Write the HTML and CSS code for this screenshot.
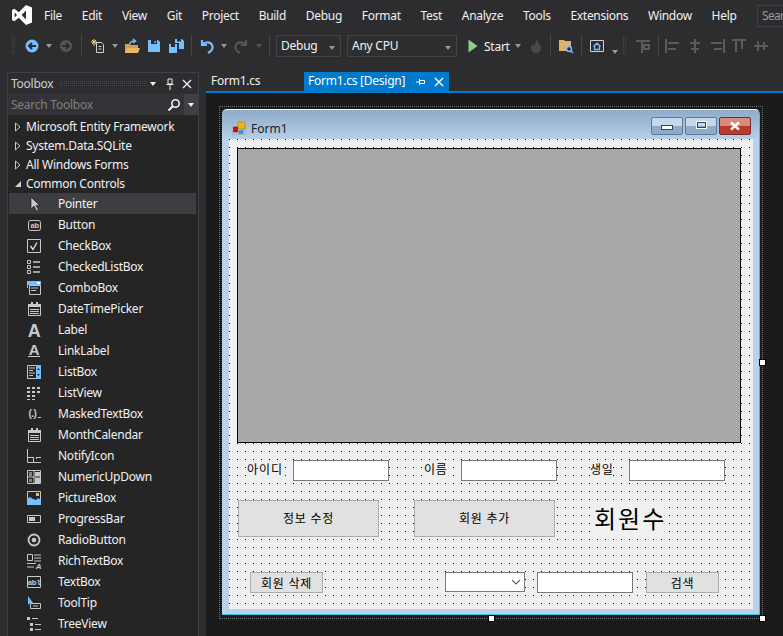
FILE: index.html
```html
<!DOCTYPE html>
<html lang="en">
<head>
<meta charset="utf-8">
<title>Form1.cs [Design]</title>
<link rel="stylesheet" href="styles.css">
</head>
<body>

<!-- menu -->
<div class="menubar">
  <svg class="logo" width="20" height="20" viewBox="0 0 20 20"><path fill="#fff" fill-rule="evenodd" d="M14 0L20 2.5V17.5L14 20L6.8 12.8L2.3 16.3L0 15V5L2.3 3.7L6.8 7.2ZM14 5.5L9.6 10L14 14.5ZM2.6 7.6V12.4L5 10Z"/></svg>
  <span class="menu m-file">File</span>
  <span class="menu">Edit</span>
  <span class="menu">View</span>
  <span class="menu">Git</span>
  <span class="menu">Project</span>
  <span class="menu">Build</span>
  <span class="menu">Debug</span>
  <span class="menu">Format</span>
  <span class="menu">Test</span>
  <span class="menu">Analyze</span>
  <span class="menu">Tools</span>
  <span class="menu">Extensions</span>
  <span class="menu">Window</span>
  <span class="menu">Help</span>
  <div class="searchbox">Sear</div>
</div>

<!-- toolbar -->
<div class="toolbar">
  <i class="grip"></i>
  <svg class="tb ml8" viewBox="0 0 16 16"><circle cx="8" cy="8" r="6.5" fill="#75beff"/><path d="M12 8H5M8 5L5 8l3 3" fill="none" stroke="#2d2d30" stroke-width="2"/></svg>
  <i class="arr"></i>
  <svg class="tb ml6" viewBox="0 0 16 16"><circle cx="8" cy="8" r="6" fill="#555"/><path d="M4 8h7M8 5l3 3-3 3" fill="none" stroke="#2d2d30" stroke-width="2"/></svg>
  <i class="sep"></i>
  <svg class="tb ml8" viewBox="0 0 16 16"><path d="M6.500 4.500h5l2 2v8h-7z" fill="none" stroke="#d0d0d0"/><path d="M8.500 8.500h3M8.500 11h3" stroke="#d0d0d0"/><path d="M4 1v7M1 4h6M2 2l4 4M6 2L2 6" stroke="#f0d080"/></svg>
  <i class="arr"></i>
  <svg class="tb ml6" viewBox="0 0 16 16"><path d="M1 6h5l1 1h7v8H1z" fill="#c9a15a"/><path d="M1 15l2-5h13l-2 5z" fill="#e8b95e"/><path d="M6 6c0-2 2-3 5-3M9 1l2.500 2L9 5" fill="none" stroke="#75beff" stroke-width="1.500"/></svg>
  <svg class="tb ml6" viewBox="0 0 16 16"><path d="M2 2h10l2 2v10H2z" fill="#75beff"/><path d="M5 2h6v4H5z" fill="#2d2d30"/><path d="M8.500 3H10v2H8.500z" fill="#75beff"/></svg>
  <svg class="tb ml6" viewBox="0 0 16 16"><path d="M1 6h8v9H1z" fill="#75beff"/><path d="M3 6h4v3H3z" fill="#2d2d30"/><path d="M7 1h7l2 2v8h-5V5H7z" fill="#75beff"/><path d="M9 1h4v2.500H9z" fill="#2d2d30"/></svg>
  <i class="sep"></i>
  <svg class="tb ml7" viewBox="0 0 16 16"><path d="M3 2v5h5M3 7c2-3 8-4 10 0s-2 7-4 8" fill="none" stroke="#75beff" stroke-width="2.200"/></svg>
  <i class="arr"></i>
  <svg class="tb ml6" viewBox="0 0 16 16"><path d="M13 2v5H8M13 7c-2-3-8-4-10 0s2 7 4 8" fill="none" stroke="#555" stroke-width="2.200"/></svg>
  <i class="arr dim"></i>
  <i class="sep"></i>
  <div class="combo c-debug">Debug<i class="arr in"></i></div>
  <div class="combo c-cpu">Any CPU<i class="arr in"></i></div>
  <svg class="tb ml8" viewBox="0 0 16 16"><path d="M3.500 1.500L12.500 8 3.500 14.500z" fill="#89d185"/></svg>
  <span class="start">Start</span>
  <i class="arr a-start"></i>
  <svg class="tb ml7" viewBox="0 0 16 16"><path d="M8 1c1 3 5 5 5 9 0 3-2 5-5 5s-5-2-5-5c0-2 1-3 2-4 0 1 .5 2 1 2 1-2 2-4 2-7z" fill="#48484a"/></svg>
  <i class="sep s6"></i>
  <svg class="tb ml7" viewBox="0 0 16 16"><path d="M1 2h5l1 1h6v10H1z" fill="#d9b36c"/><circle cx="11" cy="11" r="2.500" fill="#2d2d30" stroke="#75beff" stroke-width="1.500"/><path d="M13 13l2 2" stroke="#75beff" stroke-width="1.500"/></svg>
  <i class="sep"></i>
  <svg class="tb ml7" viewBox="0 0 16 16"><path d="M1.500 2.500h13v11h-13z" fill="none" stroke="#d0d0d0"/><path d="M4.500 8.500L8 5.200l3.500 3.300M5.500 8v3.500h5V8" fill="none" stroke="#75beff" stroke-width="1.300"/></svg>
  <i class="arr a-low"></i>
  <i class="grip g2"></i>
  <svg class="tb ml8 off" viewBox="0 0 16 16"><path d="M1 3h14M7 3v12M9 7h5v4H9z" fill="none" stroke="#5a5a5c" stroke-width="2"/></svg>
  <i class="sep"></i>
  <svg class="tb ml6 off" viewBox="0 0 16 16"><path d="M1 1v14M3 5h11M3 11h8" stroke="#5a5a5c" stroke-width="2"/></svg>
  <svg class="tb ml6 off" viewBox="0 0 16 16"><path d="M8 1v14M3 5h10M4 11h8" stroke="#5a5a5c" stroke-width="2"/></svg>
  <svg class="tb ml6 off" viewBox="0 0 16 16"><path d="M15 1v14M2 5h11M5 11h8" stroke="#5a5a5c" stroke-width="2"/></svg>
  <svg class="tb ml6 off" viewBox="0 0 16 16"><path d="M1 2h14M5 3v11M11 3v8" stroke="#5a5a5c" stroke-width="2"/></svg>
  <svg class="tb ml6 off" viewBox="0 0 16 16"><path d="M1 8h14M5 3v10M11 4v8" stroke="#5a5a5c" stroke-width="2"/></svg>
</div>

<div class="dock">

  <!-- toolbox -->
  <div class="toolbox">
    <div class="tool-head">
      <span>Toolbox</span>
      <i class="head-grip"></i>
      <i class="arr white"></i>
      <svg class="head-ico pin-ico" viewBox="0 0 12 12"><path d="M4 1h4v5H4zM2.500 6.500h7M6 7v5" fill="none" stroke="#f1f1f1"/></svg>
      <svg class="head-ico" viewBox="0 0 12 12"><path d="M2 2l8 8M10 2l-8 8" stroke="#f1f1f1" stroke-width="1.400"/></svg>
    </div>
    <div class="tool-search">
      <span class="ph">Search Toolbox</span>
      <svg class="glass" viewBox="0 0 14 14"><circle cx="8.500" cy="5.500" r="3.700" fill="none" stroke="#f1f1f1" stroke-width="1.600"/><path d="M6 8l-4.500 4.500" stroke="#f1f1f1" stroke-width="2"/></svg>
      <div class="search-drop"><i class="arr white"></i></div>
    </div>
    <div class="tree">
      <div class="group"><svg class="tri" viewBox="0 0 6 10"><path d="M.5 1v8L5 5z" fill="none" stroke="#c8c8c8"/></svg>Microsoft Entity Framework</div>
      <div class="group"><svg class="tri" viewBox="0 0 6 10"><path d="M.5 1v8L5 5z" fill="none" stroke="#c8c8c8"/></svg>System.Data.SQLite</div>
      <div class="group"><svg class="tri" viewBox="0 0 6 10"><path d="M.5 1v8L5 5z" fill="none" stroke="#c8c8c8"/></svg>All Windows Forms</div>
      <div class="group"><svg class="tri" viewBox="0 0 6 10"><path d="M0 8h6V2z" fill="#d0d0d0"/></svg>Common Controls</div>
    </div>
    <div class="items">
      <div class="item sel-row"><svg viewBox="0 0 16 16"><path d="M5 1v12l3-3 2.500 5 2-1-2.500-4.500h3.500z" fill="#c8c8c8" stroke="#111" stroke-width=".6"/></svg>Pointer</div>
      <div class="item"><svg viewBox="0 0 16 16"><rect x="2.500" y="3.500" width="12" height="10" rx="2" fill="none" stroke="#c8c8c8"/><text x="8.500" y="11" class="glyph">ab</text></svg>Button</div>
      <div class="item"><svg viewBox="0 0 16 16"><path d="M1.500 1.500h13v13h-13z" fill="none" stroke="#c8c8c8"/><path d="M4.500 8l2.500 3.500 4-7" fill="none" stroke="#e0e0e0" stroke-width="1.300"/></svg>CheckBox</div>
      <div class="item"><svg viewBox="0 0 16 16"><path d="M1.500 1.500h3v3h-3zM1.500 6.500h3v3h-3zM1.500 11.500h3v3h-3z" fill="none" stroke="#c8c8c8"/><path d="M7 3h7M7 8h7M7 13h7" stroke="#c8c8c8" stroke-width="1.500"/></svg>CheckedListBox</div>
      <div class="item"><svg viewBox="0 0 16 16"><path d="M1 1h14v4H1z" fill="#75beff"/><path d="M11 2h3v2h-3z" fill="#fff"/><path d="M3.500 5.500h11v9h-11z" fill="none" stroke="#c8c8c8"/><path d="M5 8h7M5 10.500h5" stroke="#c8c8c8"/><path d="M1.500 5v3" stroke="#75beff"/></svg>ComboBox</div>
      <div class="item"><svg viewBox="0 0 16 16"><path d="M2.500 3.500h12v11h-12z" fill="none" stroke="#c8c8c8"/><path d="M2 3h13v3H2zM5 1h2v3H5zM10 1h2v3h-2z" fill="#c8c8c8"/><path d="M4 8h9v1H4zM4 10h9v1H4zM4 12h9v1H4z" fill="#c8c8c8"/></svg>DateTimePicker</div>
      <div class="item"><svg viewBox="0 0 16 16"><text x="8" y="15" class="glyph big">A</text></svg>Label</div>
      <div class="item"><svg viewBox="0 0 16 16"><text x="8" y="11.500" class="glyph big2">A</text><path d="M2 13.500h12" stroke="#c8c8c8"/></svg>LinkLabel</div>
      <div class="item"><svg viewBox="0 0 16 16"><path d="M1.500 1.500h13v13h-13z" fill="none" stroke="#c8c8c8"/><path d="M3 4h6M3 6.500h4M3 9h6M3 11.500h4" stroke="#c8c8c8"/><path d="M10 1h5v14h-5z" fill="#75beff"/><path d="M11 6l1.500-2L14 6zM11 10l1.500 2L14 10z" fill="#2d2d30"/></svg>ListBox</div>
      <div class="item"><svg viewBox="0 0 16 16"><path d="M1 2h3v2H1zM6 2h3v2H6zM11 2h3v2h-3zM1 6h3v2H1zM6 6h3v2H6zM11 6h3v2h-3zM1 10h3v2H1zM6 10h3v2H6zM1 14h3v1H1zM6 14h3v1H6z" fill="#c8c8c8"/></svg>ListView</div>
      <div class="item"><svg viewBox="0 0 16 16"><text x="6.500" y="11" class="glyph mask">(.)</text><path d="M12 11h3v1h-3z" fill="#c8c8c8"/></svg>MaskedTextBox</div>
      <div class="item"><svg viewBox="0 0 16 16"><path d="M2.500 3.500h12v11h-12z" fill="none" stroke="#c8c8c8"/><path d="M2 3h13v3H2zM5 1h2v3H5zM10 1h2v3h-2z" fill="#c8c8c8"/><path d="M4 8h9v1H4zM4 10h9v1H4zM4 12h9v1H4z" fill="#c8c8c8"/></svg>MonthCalendar</div>
      <div class="item"><svg viewBox="0 0 16 16"><path d="M1.500 1v13.500H15" fill="none" stroke="#c8c8c8"/><path d="M1 9h6v1H1zM10 9h5v1h-5zM7 9h1v5H7zM10 9h1v2h-1z" fill="#c8c8c8"/></svg>NotifyIcon</div>
      <div class="item"><svg viewBox="0 0 16 16"><path d="M1.500 1.500h13v13h-13zM1.500 8h13M8 1.500v13" fill="none" stroke="#c8c8c8"/><path d="M9 3h5v4H9zM9 9h5v5H9z" fill="#c8c8c8"/><path d="M3 3h3v4H3zM3 10h3v3H3z" fill="#c8c8c8" fill-opacity=".6"/></svg>NumericUpDown</div>
      <div class="item"><svg viewBox="0 0 16 16"><path d="M1.500 1.500h13v13h-13z" fill="#252526" stroke="#c8c8c8"/><path d="M1 15v-6l3-2 3 2 3 1 2-2 3 2v5z" fill="#75beff"/><path d="M10 3h3v3h-3z" fill="#e8b95e"/></svg>PictureBox</div>
      <div class="item"><svg viewBox="0 0 16 16"><path d="M1.500 4.500h13v7h-13z" fill="none" stroke="#c8c8c8"/><path d="M3 6h6v4H3z" fill="#c8c8c8"/></svg>ProgressBar</div>
      <div class="item"><svg viewBox="0 0 16 16"><circle cx="8" cy="8" r="5.500" fill="none" stroke="#c8c8c8" stroke-width="1.800"/><circle cx="8" cy="8" r="2.300" fill="#c8c8c8"/></svg>RadioButton</div>
      <div class="item"><svg viewBox="0 0 16 16"><path d="M1.500 1.500h5v6h-5z" fill="none" stroke="#c8c8c8"/><path d="M8 2h7M8 5h7M8 8h7M1 10.500h9M1 14h7" stroke="#c8c8c8"/><text x="12.500" y="15.500" class="glyph ital">A</text></svg>RichTextBox</div>
      <div class="item"><svg viewBox="0 0 16 16"><path d="M1.500 2.500h13v11h-13z" fill="none" stroke="#c8c8c8"/><text x="8" y="10.500" class="glyph">abl</text></svg>TextBox</div>
      <div class="item"><svg viewBox="0 0 16 16"><path d="M4.500 8.500h10v5h-10z" fill="none" stroke="#c8c8c8"/><path d="M7 11h5" stroke="#c8c8c8"/><path d="M2 1v9l2-2 3 0z" fill="#75beff"/></svg>ToolTip</div>
      <div class="item"><svg viewBox="0 0 16 16"><path d="M1 1h3v3H1zM4 7h3v3H4zM4 12h3v3H4z" fill="#c8c8c8"/><path d="M6 2.500h6M9 8.500h6M9 13.500h6" stroke="#c8c8c8"/></svg>TreeView</div>
    </div>
  </div>

  <!-- document -->
  <div class="doc">
    <div class="tabs">
      <div class="tab">Form1.cs</div>
      <div class="tab active">Form1.cs [Design]
        <svg class="pin" viewBox="0 0 10 10"><path d="M0 5h3M3.500 2v6M3.500 3.500h5v3h-5" fill="none" stroke="#fff"/></svg>
        <svg class="tabx" viewBox="0 0 10 10"><path d="M1 1l8 8M9 1L1 9" stroke="#fff" stroke-width="1.400"/></svg>
      </div>
    </div>
    <div class="design">
      <div class="selection">
        <div class="form-win">
          <div class="titlebar">
            <svg class="form-ico" viewBox="0 0 14 14"><path d="M.5.500h13v13H.5z" fill="none" stroke="#a8b4c2"/><path d="M6 1h7v7H6z" fill="#e8b820" stroke="#a87a10" stroke-width=".6"/><path d="M1.500 6h4v5h-4z" fill="#c01818" stroke="#701010" stroke-width=".6"/><path d="M6.500 9h5v4h-5z" fill="#4a90e0"/></svg>
            <span class="form-title">Form1</span>
            <div class="capbtn"><i class="cap-min"></i></div>
            <div class="capbtn"><i class="cap-max"></i></div>
            <div class="capbtn close"><svg viewBox="0 0 12 10" width="12" height="10"><path d="M2 1.500l8 7M10 1.500l-8 7" stroke="#fff" stroke-width="2.400"/></svg></div>
          </div>
          <div class="client">
            <div class="picture"></div>

            <span class="label l-id">아이디</span>
            <div class="textbox t-id"></div>
            <span class="label l-name">이름</span>
            <div class="textbox t-name"></div>
            <span class="label l-birth">생일</span>
            <div class="textbox t-birth"></div>

            <div class="btn b-edit">정보 수정</div>
            <div class="btn b-add">회원 추가</div>
            <span class="label l-count">회원수</span>

            <div class="btn b-del">회원 삭제</div>
            <div class="dropdown"><svg viewBox="0 0 10 6" width="10" height="6"><path d="M1 1l4 4 4-4" fill="none" stroke="#606060" stroke-width="1.200"/></svg></div>
            <div class="textbox t-search"></div>
            <div class="btn b-search">검색</div>
          </div>
        </div>
        <i class="handle h-right"></i>
        <i class="handle h-bottom"></i>
        <i class="handle h-corner"></i>
      </div>
    </div>
  </div>

</div>
</body>
</html>
```

FILE: styles.css
```css
html,body{margin:0;padding:0;}
body{position:relative;width:783px;height:636px;overflow:hidden;background:#2d2d30;color:#f1f1f1;font:12px "Noto Sans","Noto Sans CJK KR",sans-serif;letter-spacing:-.25px;}
i{display:block;flex:none;}

/* menu */
.menubar{display:flex;align-items:center;height:30px;white-space:nowrap;overflow:hidden;}
.logo{flex:none;margin-left:12px;margin-right:12px;}
.menu{flex:none;margin-right:19.8px;letter-spacing:-.3px;}
.searchbox{position:absolute;left:757px;top:5px;box-sizing:border-box;width:26px;height:22px;line-height:20px;padding-left:4px;background:#2d2d30;border:1px solid #3f3f46;border-right:0;color:#999;letter-spacing:-.7px;overflow:hidden;}

/* toolbar */
.toolbar{display:flex;align-items:center;height:32px;padding-left:12px;white-space:nowrap;overflow:hidden;}
.tb{flex:none;width:16px;height:16px;}
.ml6{margin-left:6px;}
.ml7{margin-left:7px;}
.ml8{margin-left:8px;}
.grip{width:4px;height:18px;background:conic-gradient(from 0deg at 1px 1px,transparent 75%,#4a4a4e 0) 0 0/2px 2px;}
.g2{margin-left:5px;}
.arr{width:0;height:0;margin-left:6px;border-left:3.5px solid transparent;border-right:3.500px solid transparent;border-top:4px solid #999;}
.arr.dim{border-top-color:#555;margin-left:7px;}
.arr.white{border-top-color:#f1f1f1;margin-left:0;}
.arr.in{position:absolute;right:5px;top:10px;margin:0;}
.a-start{margin-left:6px;}
.a-low{margin-left:7px;margin-top:12px;}
.sep{width:1px;height:22px;margin-left:7px;background:#46464a;}
.s6{margin-left:6px;}
.combo{flex:none;position:relative;box-sizing:border-box;height:22px;line-height:20px;padding-left:4px;border:1px solid #434346;background:#2e2e31;margin-left:6px;}
.c-debug{width:65px;}
.c-cpu{width:110px;}
.start{flex:none;margin-left:3px;width:25px;}

/* dock */
.dock{display:flex;height:564px;padding-top:10px;}

/* toolbox */
.toolbox{flex:none;box-sizing:border-box;width:192px;margin-left:7px;height:564px;background:#252526;border:1px solid #3f3f46;border-bottom:0;overflow:hidden;}
.tool-head{display:flex;align-items:center;height:21px;padding-left:3px;padding-right:5px;background:#2d2d30;color:#d0d0d0;}
.head-grip{flex:1;height:5px;margin:0 3px 0 7px;background:conic-gradient(from 0deg at 1px 1px,transparent 75%,#46464a 0) 0 0/2px 2px;}
.head-ico{flex:none;width:12px;height:12px;margin-left:5px;}
.pin-ico{margin-left:8px;}
.tool-search{display:flex;align-items:center;height:21px;background:#333337;color:#808080;}
.ph{flex:1;padding-left:3px;}
.glass{flex:none;width:14px;height:14px;margin-right:3px;}
.search-drop{display:flex;align-items:center;justify-content:center;flex:none;width:14px;height:21px;background:#3f3f46;}
.tree{padding-top:2px;}
.group{display:flex;align-items:center;height:19px;padding-left:7px;}
.tri{flex:none;width:6px;height:10px;margin-right:5px;}
.item{display:flex;align-items:center;height:21px;padding-left:17px;margin-right:2px;margin-left:1px;}
.item svg{flex:none;width:16px;height:16px;margin-right:16px;overflow:visible;}
.sel-row{background:#3e3e42;}
.glyph{font:bold 8px "Liberation Mono",monospace;fill:#c8c8c8;text-anchor:middle;letter-spacing:-.5px;}
.big{font:bold 18px "Liberation Sans",sans-serif;}
.big2{font:bold 15px "Liberation Sans",sans-serif;}
.mask{font:bold 10px "Liberation Sans",sans-serif;}
.ital{font:italic bold 8px "Liberation Sans",sans-serif;}

/* document */
.doc{flex:1;margin-left:7px;min-width:0;}
.tabs{display:flex;height:19px;border-bottom:2px solid #007acc;}
.tab{box-sizing:border-box;width:98px;height:19px;line-height:18px;padding-left:5px;}
.tab.active{position:relative;width:145px;padding-left:4px;background:#007acc;color:#fff;}
.pin{position:absolute;left:112px;top:5px;width:10px;height:10px;}
.tabx{position:absolute;left:130px;top:5px;width:10px;height:10px;}
.design{height:543px;background:#1b1b1b;padding:13px 0 0 13px;overflow:hidden;}

/* form on the design surface */
.selection{position:relative;box-sizing:border-box;width:544px;height:513px;padding:2px;border:1px dotted #707070;}
.form-win{box-sizing:border-box;width:538px;height:506px;padding:0 7px 6px;border-top:1px solid #fff;border-bottom:1px solid #3cc0e0;border-right:1px solid #3cc0e0;border-radius:5px 5px 0 0;background:linear-gradient(#8eabc9,#b9d1ea 30px);letter-spacing:0;}
.titlebar{display:flex;align-items:center;box-sizing:border-box;height:29px;padding:7px 1px 0 0;color:#222;}
.form-ico{flex:none;width:14px;height:14px;margin-left:3px;}
.form-title{flex:1;margin-left:5px;}
.capbtn{display:flex;align-items:center;justify-content:center;box-sizing:border-box;width:32px;height:18px;margin:-5px 0 0 2px;border:1px solid #5f7a98;border-radius:2px;background:linear-gradient(#c5d8ec 50%,#8eabc9 50%);}
.capbtn.close{border-color:#7a2a2a;background:linear-gradient(#d88a7c 50%,#b73a2a 50%);}
.cap-min{width:10px;height:3px;margin-top:4px;background:#fff;border:1px solid #444;}
.cap-max{width:7px;height:4px;margin-bottom:2px;background:transparent;border:1px solid #444;outline:1px solid #fff;}

.client{position:relative;width:524px;height:470px;font-size:12px;color:#000;background:#f0f0f0 conic-gradient(from 0deg at 1px 1px,transparent 75%,#000 0) 0 0/8px 8px;letter-spacing:.7px;}
.picture{position:absolute;left:8px;top:9px;box-sizing:border-box;width:504px;height:295px;background:#a9a9a9;border:1px solid #000;}
.label{position:absolute;background:#f0f0f0;line-height:14px;white-space:nowrap;}
.l-id{left:18px;top:324px;letter-spacing:1px;}
.l-name{left:195px;top:324px;}
.l-birth{left:361px;top:324px;}
.l-count{left:365px;top:366px;font-size:24px;line-height:28px;letter-spacing:2px;}
.textbox{position:absolute;box-sizing:border-box;width:96px;height:21px;background:#fff;border:1px solid #7a7a7a;}
.t-id{left:64px;top:321px;}
.t-name{left:232px;top:321px;}
.t-birth{left:400px;top:321px;}
.t-search{left:308px;top:433px;}
.btn{position:absolute;box-sizing:border-box;display:flex;align-items:center;justify-content:center;background:#e1e1e1;border:1px solid #adadad;white-space:nowrap;}
.b-edit{left:9px;top:361px;width:141px;height:37px;padding-bottom:2px;}
.b-add{left:185px;top:361px;width:141px;height:37px;padding-bottom:2px;}
.b-del{left:21px;top:433px;width:73px;height:21px;}
.b-search{left:417px;top:433px;width:73px;height:21px;}
.dropdown{position:absolute;left:216px;top:433px;box-sizing:border-box;display:flex;align-items:center;justify-content:flex-end;padding-right:3px;width:80px;height:20px;background:#fff;border:1px solid #7a7a7a;}
.handle{position:absolute;box-sizing:border-box;width:7px;height:7px;background:#fff;border:1px solid #000;}
.h-right{left:539px;top:252px;}
.h-bottom{left:268px;top:508px;}
.h-corner{left:539px;top:508px;}
```
